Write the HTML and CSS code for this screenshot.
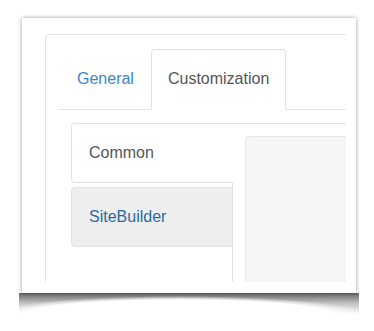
FILE: index.html
```html
<!DOCTYPE html>
<html lang="en">
<head>
	<meta charset="UTF-8">
	<title>Customization</title>
<link rel="stylesheet" href="styles.css">
</head>
<body>
<div class="card">
	<div class="view">
		<div class="panel">
			<ul class="tabs">
				<li><a href="#">General</a></li>
				<li class="active"><a href="#">Customization</a></li>
			</ul>
			<div class="tab-content">
				<div class="sub">
					<ul class="side">
						<li class="on"><a href="#">Common</a></li>
						<li class="sel"><a href="#">SiteBuilder</a></li>
					</ul>
					<div class="pane">
						<div class="well"></div>
					</div>
				</div>
			</div>
		</div>
	</div>
</div>
<div class="curl"></div>
</body>
</html>
```

FILE: styles.css
```css
*{padding: 0;margin: 0;box-sizing: border-box;}
body{background: #fff;font-family: "Liberation Sans", Arial, sans-serif;font-size: 16px;}
a{text-decoration: none;}
ul{list-style: none;}

.card{
	width: 334px;height: 275px;margin: 18px 0 0 22px;padding: 16px 0 0 23px;
	background: #fff;box-shadow: 0 0 4px rgba(0,0,0,.4);
}
/* page-curl shadow under the card */
.curl{
	width: 340px;height: 22px;margin-left: 19px;
	background: linear-gradient(rgba(0,0,0,.6), rgba(0,0,0,.25) 45%, rgba(0,0,0,0));
	-webkit-mask-image: radial-gradient(ellipse 190px 19px at 47% 100%, transparent 80%, #000 100%);
	mask-image: radial-gradient(ellipse 190px 19px at 47% 100%, transparent 80%, #000 100%);
}
.view{width: 301px;height: 248px;overflow: hidden;}

.panel{
	width: 420px;height: 400px;border: 1px solid #e2e2e2;border-radius: 4px;padding: 14px 0 0 12px;
}
.tabs{display: flex;border-bottom: 1px solid #e2e2e2;}
.tabs li{margin-bottom: -1px;}
.tabs li:first-child{padding-left: 2px;}
.tabs a{
	display: block;padding: 19px 16px 20px;line-height: 20px;border: 1px solid transparent;
	border-radius: 4px 4px 0 0;color: #3a87c9;
}
.tabs .active a{color: #555;background: #fff;border-color: #e2e2e2 #e2e2e2 transparent;}
.tab-content{padding: 13px 0 0 13px;}

.sub{display: flex;}
.side{width: 162px;border-right: 1px solid #e2e2e2;height: 300px;}
.side a{
	display: block;padding: 19px 17px;line-height: 20px;margin-right: -1px;
	border: 1px solid #e2e2e2;border-right: none;border-radius: 4px 0 0 4px;
}
.side .on a{color: #555;background: #fff;}
.side .sel{margin-top: 4px;}
.side .sel a{color: #2b6aa1;background: #eee;border-right: 1px solid #e2e2e2;}
.pane{flex: 1;border-top: 1px solid #e2e2e2;padding: 12px 0 0 12px;}
.well{height: 300px;background: #f5f5f5;border: 1px solid #e6e6e6;border-radius: 4px;}
```
